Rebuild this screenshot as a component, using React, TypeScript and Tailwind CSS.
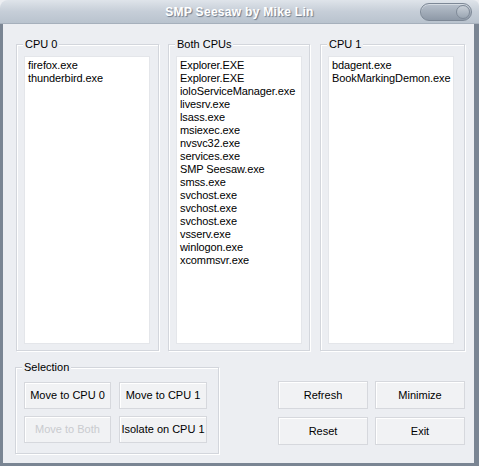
const cpu0 = ["firefox.exe", "thunderbird.exe"];
const both = [
  "Explorer.EXE",
  "Explorer.EXE",
  "ioloServiceManager.exe",
  "livesrv.exe",
  "lsass.exe",
  "msiexec.exe",
  "nvsvc32.exe",
  "services.exe",
  "SMP Seesaw.exe",
  "smss.exe",
  "svchost.exe",
  "svchost.exe",
  "svchost.exe",
  "vsserv.exe",
  "winlogon.exe",
  "xcommsvr.exe",
];
const cpu1 = ["bdagent.exe", "BookMarkingDemon.exe"];

const font = "font-['Liberation_Sans',Arial,sans-serif]";

// etched group box, label sits over the top edge
const Group = ({
  label,
  className,
  children,
}: {
  label: string;
  className?: string;
  children: React.ReactNode;
}) => (
  <div
    className={`relative shrink-0 border border-[#d3d6dc] shadow-[inset_1px_1px_0_#ffffff,1px_1px_0_#ffffff] ${className ?? ""}`}
  >
    <span className="absolute -top-[8px] left-[6px] bg-[#eceef2] px-[2px] text-[11px] leading-[14px] text-black">
      {label}
    </span>
    {children}
  </div>
);

const ProcList = ({ items }: { items: string[] }) => (
  <div className="ml-[7px] mt-[11px] h-[288px] w-[126px] border border-[#e4e6ea] bg-white px-[3px] pt-[2px] text-[11px] leading-[13px] tracking-[-0.1px] text-black">
    {items.map((p, i) => (
      <div key={i} className="whitespace-nowrap">
        {p}
      </div>
    ))}
  </div>
);

const Btn = ({
  label,
  disabled,
  className,
}: {
  label: string;
  disabled?: boolean;
  className?: string;
}) => (
  <button
    className={`flex items-center justify-center whitespace-nowrap border border-[#d6d8dd] bg-[#f1f2f4] text-[11px] shadow-[inset_1px_1px_0_#ffffff] ${
      disabled ? "text-[#c9cbcf]" : "text-black"
    } ${className ?? ""}`}
  >
    {label}
  </button>
);

export default function App() {
  return (
    <div className={`w-[479px] h-[466px] ${font} flex flex-col bg-[#eceef2]`}>
      <div className="relative flex h-[24px] shrink-0 items-center justify-center rounded-tl-[8px] rounded-tr-[6px] border-b border-[#a6b0bc] bg-gradient-to-b from-[#dfe4ea] via-[#c6ced8] to-[#b9c3ce]">
        <span className="text-[12px] font-bold tracking-[0.3px] text-white [text-shadow:1px_1px_1px_#6f7b8a]">
          SMP Seesaw by Mike Lin
        </span>
        <div className="absolute right-[7px] top-[3px] flex h-[18px] w-[52px] items-center justify-end rounded-full border border-[#7d8896] bg-gradient-to-b from-[#b8c1cc] to-[#8e99a7] pr-[1px] shadow-[inset_0_1px_0_#d5dbe2]">
          <div className="h-[14px] w-[14px] rounded-full border border-[#7f8a98] bg-gradient-to-b from-[#c9d0d8] to-[#9aa5b2]" />
        </div>
      </div>
      <div className="flex flex-1 flex-col border-b-[3px] border-l-[3px] border-r-[5px] border-[#7a8593] pl-[13px] pt-[20px]">
        <div className="flex">
          <Group label="CPU 0" className="h-[307px] w-[143px]">
            <ProcList items={cpu0} />
          </Group>
          <Group label="Both CPUs" className="ml-[9px] h-[307px] w-[142px]">
            <ProcList items={both} />
          </Group>
          <Group label="CPU 1" className="ml-[10px] h-[307px] w-[145px]">
            <ProcList items={cpu1} />
          </Group>
        </div>
        <div className="-ml-[1px] mt-[16px] flex items-start">
          <Group label="Selection" className="h-[87px] w-[204px]">
            <div className="grid grid-cols-[87px_88px] content-start gap-x-[8px] gap-y-[7px] pl-[8px] pt-[14px]">
              <Btn label="Move to CPU 0" className="h-[27px]" />
              <Btn label="Move to CPU 1" className="h-[27px]" />
              <Btn label="Move to Both" disabled className="h-[27px]" />
              <Btn label="Isolate on CPU 1" className="h-[27px]" />
            </div>
          </Group>
          <div className="ml-[59px] mt-[14px] grid grid-cols-[90px_90px] content-start gap-x-[7px] gap-y-[8px]">
            <Btn label="Refresh" className="h-[28px]" />
            <Btn label="Minimize" className="h-[28px]" />
            <Btn label="Reset" className="h-[28px]" />
            <Btn label="Exit" className="h-[28px]" />
          </div>
        </div>
      </div>
    </div>
  );
}
